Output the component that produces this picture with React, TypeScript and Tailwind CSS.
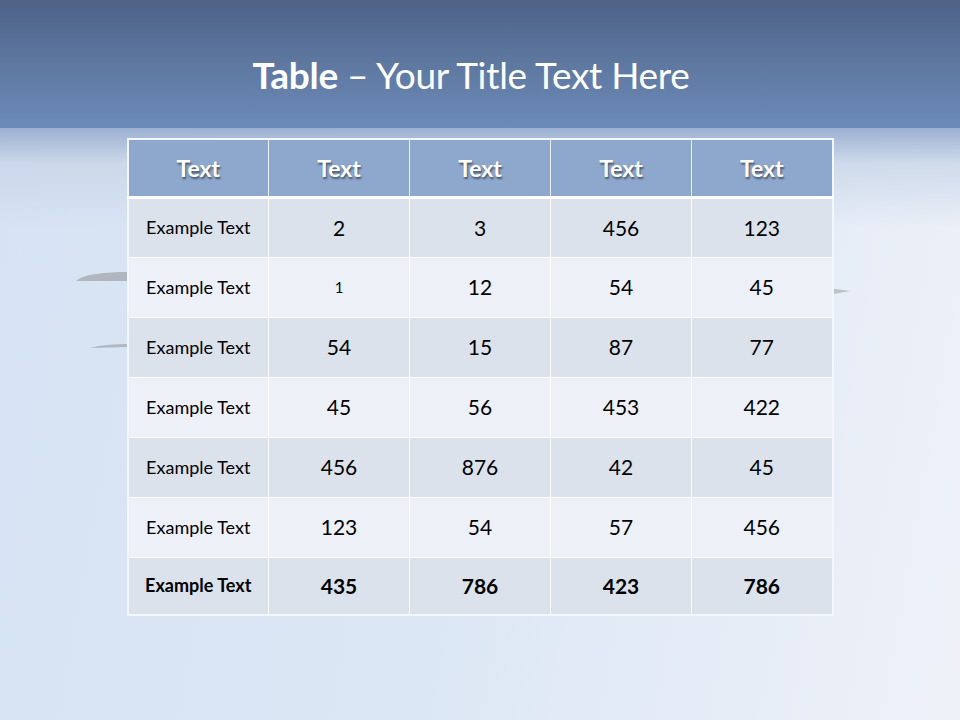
import React from "react";

const rows: { label: string; vals: string[]; small?: number }[] = [
  { label: "Example Text", vals: ["2", "3", "456", "123"] },
  { label: "Example Text", vals: ["1", "12", "54", "45"], small: 0 },
  { label: "Example Text", vals: ["54", "15", "87", "77"] },
  { label: "Example Text", vals: ["45", "56", "453", "422"] },
  { label: "Example Text", vals: ["456", "876", "42", "45"] },
  { label: "Example Text", vals: ["123", "54", "57", "456"] },
];

export default function App() {
  return (
    <div
      className="relative w-[960px] h-[720px] overflow-hidden bg-[linear-gradient(100deg,#d6e3f4_0%,#dce7f5_50%,#eef1f8_100%)]"
      style={{ fontFamily: "Lato, 'Open Sans', sans-serif" }}
    >
      {/* sky band */}
      <div className="absolute inset-x-0 top-0 h-[128px] bg-[linear-gradient(180deg,#4e6287_0%,#5e78a0_50%,#6b8ab8_100%)]" />
      <div className="absolute inset-x-0 top-[128px] h-[100px] bg-[linear-gradient(180deg,#9cb0d2_0%,rgba(200,213,232,0.8)_35%,rgba(220,230,243,0)_100%)]" />

      {/* wing streaks */}
      <svg className="absolute left-[74px] top-[268px]" width="60" height="90" viewBox="0 0 60 90">
        <path d="M2 13 C10 6 30 4 56 4 L56 13 Z" fill="#a9adb4" opacity="0.85" />
        <path d="M16 80 C26 77 40 76 56 76 L56 79 Z" fill="#a9adb4" opacity="0.8" />
      </svg>
      <svg className="absolute left-[828px] top-[286px]" width="26" height="12" viewBox="0 0 26 12">
        <path d="M0 2 L22 5 L0 9 Z" fill="#b3b7bd" opacity="0.8" />
      </svg>

      <div className="relative flex flex-col items-center">
        <h1 className="mt-[50px] h-[52px] pr-[18px] text-[37px] leading-[50px] text-white tracking-[-0.3px]">
          <span className="font-bold">Table</span> – Your Title Text Here
        </h1>

        <table className="mt-[36px] border-collapse border-2 border-[#f3f6fb] text-black table-fixed">
          <thead>
            <tr className="bg-[#8ea8cd] h-[58px] border-b-[3px] border-white">
              {[0, 1, 2, 3, 4].map((i) => (
                <th
                  key={i}
                  className="w-[141px] border border-[#eef2f8] text-white font-bold text-[23px] [text-shadow:1px_2px_2px_rgba(0,0,0,0.5)]"
                >
                  Text
                </th>
              ))}
            </tr>
          </thead>
          <tbody>
            {rows.map((r, i) => (
              <tr key={i} className={`h-[60px] ${i % 2 === 0 ? "bg-[#dbe2ec]" : "bg-[#edf1f7]"}`}>
                <td className="border border-white text-center text-[18px]">{r.label}</td>
                {r.vals.map((v, j) => (
                  <td
                    key={j}
                    className={`border border-white text-center ${r.small === j ? "text-[15px]" : "text-[21px]"}`}
                  >
                    {v}
                  </td>
                ))}
              </tr>
            ))}
            <tr className="h-[58px] bg-[#dbe2ec] font-bold">
              <td className="border border-white text-center text-[18px]">Example Text</td>
              {["435", "786", "423", "786"].map((v, j) => (
                <td key={j} className="border border-white text-center text-[21px]">
                  {v}
                </td>
              ))}
            </tr>
          </tbody>
        </table>
      </div>
    </div>
  );
}
